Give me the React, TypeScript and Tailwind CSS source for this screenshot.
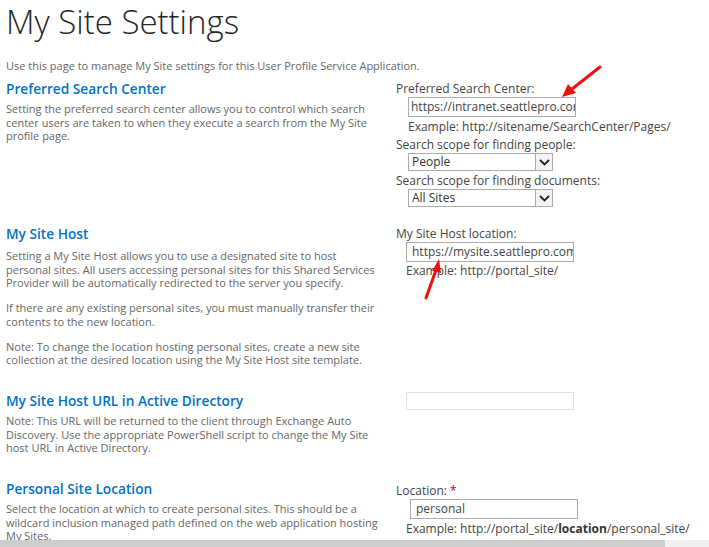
import React from "react";

const F = { fontFamily: '"Open Sans", "Noto Sans", sans-serif' } as React.CSSProperties;

function TextInput({ value, w, ml, h = "h-[20px]", light = false, pl = "pl-[2px]" }: { value: string; w: string; ml: string; h?: string; light?: boolean; pl?: string }) {
  return (
    <div
      className={`${w} ${ml} ${h} ${pl} border ${light ? "border-[#e1e1e1]" : "border-[#ababab]"} bg-white overflow-hidden whitespace-nowrap flex items-center text-[12px] text-[#444]`}
    >
      {value}
    </div>
  );
}

function Select({ value }: { value: string }) {
  return (
    <div className="ml-[12px] w-[145px] h-[18px] border border-[#ababab] flex bg-white">
      <div className="flex-1 pl-[3px] flex items-center text-[12px] text-[#333]">{value}</div>
      <div className="w-[17px] border-l border-[#ababab] bg-[#f2f2f2] flex items-center justify-center">
        <svg width="11" height="7" viewBox="0 0 11 7">
          <path d="M1 1 L5.5 5.5 L10 1" fill="none" stroke="#222" strokeWidth="1.8" />
        </svg>
      </div>
    </div>
  );
}

export default function App() {
  return (
    <div className="relative w-[709px] h-[547px] overflow-hidden bg-white" style={F}>
      <div className="pl-[6px]">
        <h1 className="text-[33px] leading-[32px] font-light text-[#262626] pt-[6px]">My Site Settings</h1>
        <p className="mt-[21px] text-[11px] leading-[14px] text-[#666]">
          Use this page to manage My Site settings for this User Profile Service Application.
        </p>

        {/* Row 1 */}
        <div className="grid grid-cols-[390px_1fr] h-[145px] mt-[8px]">
          <div>
            <h2 className="text-[13.7px] leading-[16px] font-semibold text-[#0072c6]">Preferred Search Center</h2>
            <p className="mt-[5px] text-[11px] leading-[13.5px] text-[#666] pr-[6px]">
              Setting the preferred search center allows you to control which search center users are taken to when they execute a search from the My Site profile page.
            </p>
          </div>
          <div className="text-[12px] text-[#444]">
            <div className="leading-[16px]">Preferred Search Center:</div>
            <TextInput value="https://intranet.seattlepro.com" w="w-[168px]" ml="ml-[12px]" />
            <div className="ml-[12px] leading-[16px] mt-[2px]">Example: http://sitename/SearchCenter/Pages/</div>
            <div className="leading-[16px] mt-[2px]">Search scope for finding people:</div>
            <Select value="People" />
            <div className="leading-[16px] mt-[2px]">Search scope for finding documents:</div>
            <Select value="All Sites" />
          </div>
        </div>

        {/* Row 2 */}
        <div className="grid grid-cols-[390px_1fr] h-[166px]">
          <div>
            <h2 className="text-[13.7px] leading-[16px] font-semibold text-[#0072c6]">My Site Host</h2>
            <div className="mt-[7px] text-[11px] leading-[13.5px] text-[#666] pr-[20px] flex flex-col gap-[11.5px]">
              <p>Setting a My Site Host allows you to use a designated site to host personal sites. All users accessing personal sites for this Shared Services Provider will be automatically redirected to the server you specify.</p>
              <p>If there are any existing personal sites, you must manually transfer their contents to the new location.</p>
              <p>Note: To change the location hosting personal sites, create a new site collection at the desired location using the My Site Host site template.</p>
            </div>
          </div>
          <div className="text-[12px] text-[#444]">
            <div className="leading-[16px]">My Site Host location:</div>
            <TextInput value="https://mysite.seattlepro.com" w="w-[168px]" ml="ml-[10px]" pl="pl-[5px]" />
            <div className="ml-[10px] leading-[16px] mt-[1px]">Example: http://portal_site/</div>
          </div>
        </div>

        {/* Row 3 */}
        <div className="grid grid-cols-[390px_1fr] h-[89px]">
          <div className="pt-[1px]">
            <h2 className="text-[13.7px] leading-[16px] font-semibold text-[#0072c6]">My Site Host URL in Active Directory</h2>
            <p className="mt-[5px] text-[11px] leading-[13.5px] text-[#666] pr-[6px]">
              Note: This URL will be returned to the client through Exchange Auto Discovery. Use the appropriate PowerShell script to change the My Site host URL in Active Directory.
            </p>
          </div>
          <div>
            <TextInput value="" w="w-[168px]" ml="ml-[10px]" h="h-[18px]" light />
          </div>
        </div>

        {/* Row 4 */}
        <div className="grid grid-cols-[390px_1fr]">
          <div>
            <h2 className="text-[13.7px] leading-[16px] font-semibold text-[#0072c6]">Personal Site Location</h2>
            <p className="mt-[5px] text-[11px] leading-[13.5px] text-[#666] pr-[6px]">
              Select the location at which to create personal sites. This should be a wildcard inclusion managed path defined on the web application hosting My Sites.
            </p>
          </div>
          <div className="text-[12px] text-[#444]">
            <div className="leading-[16px] pt-[2px]">
              Location: <span className="text-[#bf0000]">*</span>
            </div>
            <TextInput value="personal" w="w-[168px]" ml="ml-[14px]" pl="pl-[5px]" />
            <div className="ml-[10px] leading-[16px] mt-[2px]">
              Example: http://portal_site/<b className="font-bold text-[#333]">location</b>/personal_site/
            </div>
          </div>
        </div>
      </div>

      {/* Red annotation arrows */}
      <svg className="absolute left-0 top-0 pointer-events-none" width="709" height="547">
        <line x1="600" y1="67" x2="572" y2="89" stroke="#f01010" strokeWidth="3" strokeLinecap="round" />
        <polygon points="562,97 568,84 576,93" fill="#f01010" />
        <line x1="426" y1="298" x2="436" y2="270" stroke="#f01010" strokeWidth="3" strokeLinecap="round" />
        <polygon points="439,259 432,271 441,273" fill="#f01010" />
      </svg>

      {/* Horizontal scrollbar */}
      <div className="absolute left-0 bottom-0 w-[709px] h-[7px] bg-[#f0f0f0]">
        <div className="w-[665px] h-[7px] bg-[#cdcdcd]" />
      </div>
    </div>
  );
}
